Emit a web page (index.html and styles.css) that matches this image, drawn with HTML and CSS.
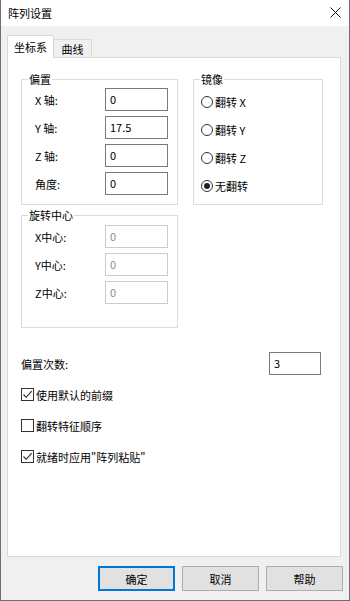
FILE: index.html
```html
<!DOCTYPE html>
<html lang="zh-CN">
<head>
<meta charset="utf-8">
<title>阵列设置</title>
<link rel="stylesheet" href="styles.css">
</head>
<body>
<div class="window">
  <div class="titlebar">
    <span class="title">阵列设置</span>
    <svg class="close" width="11" height="11" viewBox="0 0 11 11"><path d="M0.5 0.5 L10.5 10.5 M10.5 0.5 L0.5 10.5" stroke="#111" stroke-width="1" fill="none"/></svg>
  </div>
  <div class="content">
    <div class="tabs">
      <div class="tab active">坐标系</div>
      <div class="tab">曲线</div>
    </div>
    <div class="panel">
      <div class="groups">
        <div class="group offset">
          <span class="legend">偏置</span>
          <div class="fields">
            <div class="field"><span class="label">X 轴:</span><span class="input">0</span></div>
            <div class="field"><span class="label">Y 轴:</span><span class="input">17.5</span></div>
            <div class="field"><span class="label">Z 轴:</span><span class="input">0</span></div>
            <div class="field"><span class="label">角度:</span><span class="input">0</span></div>
          </div>
        </div>
        <div class="group mirror">
          <span class="legend">镜像</span>
          <div class="radios">
            <div class="radio"><span class="dot"></span><span>翻转 X</span></div>
            <div class="radio"><span class="dot"></span><span>翻转 Y</span></div>
            <div class="radio"><span class="dot"></span><span>翻转 Z</span></div>
            <div class="radio checked"><span class="dot"></span><span>无翻转</span></div>
          </div>
        </div>
        <div class="group center">
          <span class="legend">旋转中心</span>
          <div class="fields">
            <div class="field"><span class="label">X中心:</span><span class="input disabled">0</span></div>
            <div class="field"><span class="label">Y中心:</span><span class="input disabled">0</span></div>
            <div class="field"><span class="label">Z中心:</span><span class="input disabled">0</span></div>
          </div>
        </div>
      </div>
      <div class="count-row">
        <span class="label">偏置次数:</span>
        <span class="input count">3</span>
      </div>
      <div class="checks">
        <div class="check on"><span class="box"><svg width="11" height="11" viewBox="0 0 11 11"><path d="M1.5 5.5 L4.2 8.3 L9.7 2.2" stroke="#222" stroke-width="1.1" fill="none"/></svg></span><span>使用默认的前缀</span></div>
        <div class="check"><span class="box"></span><span>翻转特征顺序</span></div>
        <div class="check on"><span class="box"><svg width="11" height="11" viewBox="0 0 11 11"><path d="M1.5 5.5 L4.2 8.3 L9.7 2.2" stroke="#222" stroke-width="1.1" fill="none"/></svg></span><span>就绪时应用"阵列粘贴"</span></div>
      </div>
    </div>
    <div class="buttons">
      <button class="btn default">确定</button>
      <button class="btn">取消</button>
      <button class="btn">帮助</button>
    </div>
  </div>
</div>
</body>
</html>
```
FILE: styles.css
```css
* { box-sizing: border-box; }
html, body { margin: 0; padding: 0; background: #f0f0f0; }
body {
  font-family: "Noto Sans CJK SC", "Microsoft YaHei", sans-serif;
  font-size: 11px;
  color: #000;
}
.window {
  width: 350px;
  height: 601px;
  border: 1px solid #6e6e6e;
  border-top: none;
  display: flex;
  flex-direction: column;
  background: #f0f0f0;
}
.titlebar {
  height: 26px;
  background: #fff;
  display: flex;
  align-items: center;
  justify-content: space-between;
  padding: 0 8px 0 7px;
  flex: none;
}
.title { font-size: 11px; line-height: 14px; }
.close { display: block; margin-top: -1px; }
.content {
  flex: 1;
  display: flex;
  flex-direction: column;
  padding: 9px 6px 0 6px;
}
.tabs {
  display: flex;
  align-items: flex-end;
  height: 22px;
  position: relative;
  z-index: 1;
}
.tab {
  height: 18px;
  border: 1px solid #d9d9d9;
  border-bottom: none;
  background: #f0f0f0;
  display: flex;
  align-items: center;
  justify-content: center;
  width: 39px;
  margin-left: -1px;
  line-height: 14px;
  padding-top: 1px;
}
.tab.active {
  height: 23px;
  width: 47px;
  margin-left: 0;
  margin-bottom: -1px;
  background: #fff;
  padding-top: 0;
  padding-bottom: 1px;
}
.panel {
  height: 500px;
  width: 334px;
  border: 1px solid #d9d9d9;
  background: #fff;
  padding: 21px 0 0 13px;
  display: flex;
  flex-direction: column;
}
.groups {
  display: grid;
  grid-template-columns: 157px 130px;
  column-gap: 15px;
  row-gap: 10px;
  align-items: start;
}
.group {
  border: 1px solid #dcdcdc;
  display: flex;
  flex-direction: column;
  align-items: flex-start;
}
.group.offset, .group.mirror { height: 126px; }
.group.center { height: 113px; }
.legend {
  background: #fff;
  line-height: 14px;
  margin: -8px 0 0 6px;
  padding: 0 1px;
}
.fields {
  display: flex;
  flex-direction: column;
  gap: 5px;
  padding-left: 13px;
  margin-top: 2px;
}
.group.center .fields { margin-top: 3px; }
.field {
  display: grid;
  grid-template-columns: 70px 63px;
  align-items: center;
}
.label { line-height: 14px; }
.input {
  height: 23px;
  border: 1px solid #7a7a7a;
  background: #fff;
  padding: 0 0 0 4px;
  line-height: 20px;
  font-size: 11px;
  display: block;
}
.input.disabled { border-color: #cccccc; color: #8d8d8d; }
.radios {
  display: flex;
  flex-direction: column;
  padding-left: 7px;
  margin-top: 2px;
}
.radio {
  height: 28px;
  display: flex;
  align-items: center;
  gap: 2px;
  line-height: 14px;
}
.dot {
  width: 12px;
  height: 12px;
  border: 1px solid #333;
  border-radius: 50%;
  display: flex;
  align-items: center;
  justify-content: center;
  background: #fff;
}
.radio.checked .dot::after {
  content: "";
  width: 6px;
  height: 6px;
  border-radius: 50%;
  background: #222;
}
.count-row {
  display: flex;
  justify-content: space-between;
  align-items: center;
  margin-top: 24px;
  padding-right: 19px;
}
.input.count { width: 52px; }
.checks {
  display: flex;
  flex-direction: column;
  gap: 18px;
  margin-top: 13px;
}
.check {
  height: 13px;
  display: flex;
  align-items: center;
  gap: 2px;
  line-height: 14px;
}
.box {
  width: 13px;
  height: 13px;
  border: 1px solid #333;
  background: #fff;
  display: flex;
  align-items: center;
  justify-content: center;
}
.box svg { display: block; }
.buttons {
  display: flex;
  justify-content: flex-end;
  gap: 7px;
  margin-top: 9px;
}
.btn {
  width: 77px;
  height: 25px;
  border: 1px solid #adadad;
  background: #e1e1e1;
  font-family: inherit;
  font-size: 11px;
  color: #000;
  padding: 0;
  line-height: 14px;
}
.btn.default { border: 2px solid #0078d7; }
```
